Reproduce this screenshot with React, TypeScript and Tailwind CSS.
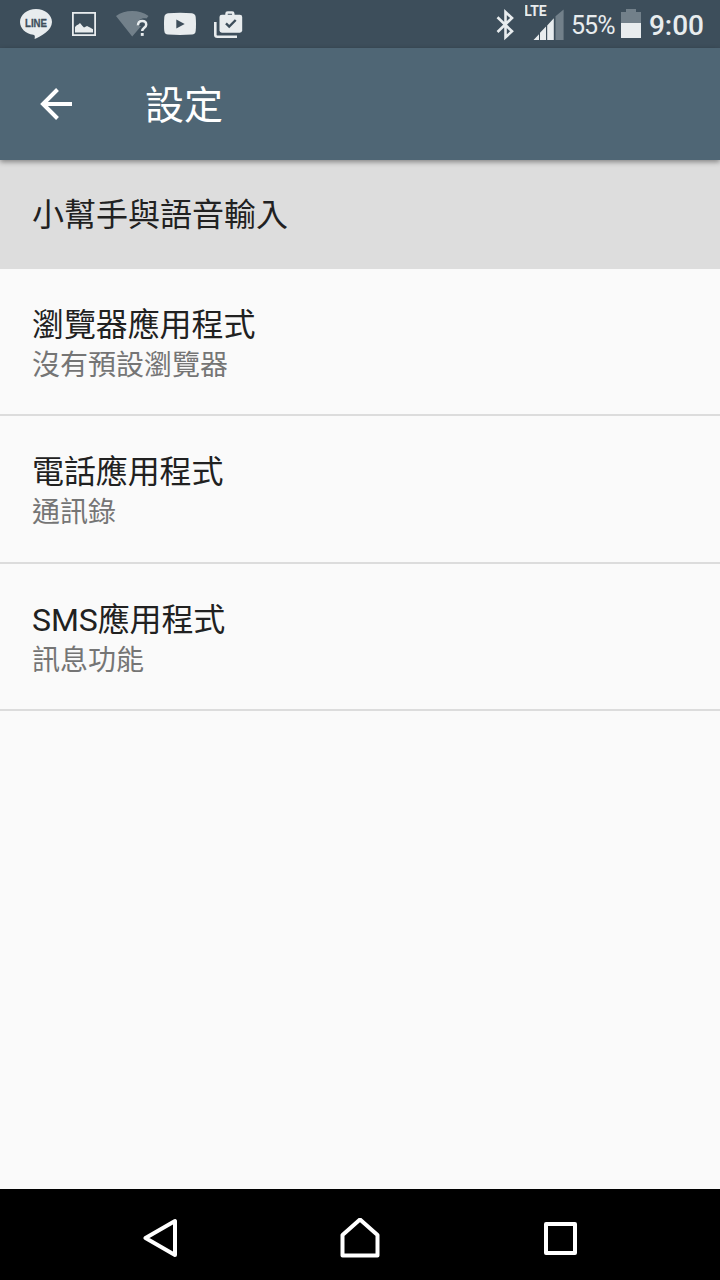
import React from "react";

interface SettingItem {
  title: string;
  summary?: string;
  selected?: boolean;
}

const items: SettingItem[] = [
  { title: "小幫手與語音輸入", selected: true },
  { title: "瀏覽器應用程式", summary: "沒有預設瀏覽器" },
  { title: "電話應用程式", summary: "通訊錄" },
  { title: "SMS應用程式", summary: "訊息功能" },
];

const NotificationIcons: React.FC = () => (
  <div className="flex items-center text-[#e8ecee]">
    {/* LINE */}
    <svg width="32" height="48" viewBox="0 0 32 48" fill="currentColor">
      <path d="M16 9C7.2 9 0 14.8 0 22c0 6.400 5.700 11.800 13.300 12.800 1.900.4 1.700 1.600 1.300 4.200C20.500 36.500 32 30.500 32 22 32 14.800 24.800 9 16 9z" />
      <text
        x="16"
        y="26.500"
        textAnchor="middle"
        textLength="22"
        lengthAdjust="spacingAndGlyphs"
        strokeWidth="0.3"
        className="fill-[#3d4e5b] stroke-[#3d4e5b] font-['Liberation_Sans'] text-[11px] font-bold"
      >
        LINE
      </text>
    </svg>
    {/* Screenshot */}
    <svg className="ml-5" width="24" height="48" viewBox="0 0 24 48">
      <rect x=".9" y="12.900" width="22.200" height="22.200" fill="none" stroke="currentColor" strokeWidth="1.800" />
      <path d="M3 32.500V27l2-2 1-.2L8 23l2.500 3 1.500 1.500 3-1.500 3 1.500 3 1.700v3.300z" fill="currentColor" />
    </svg>
    {/* Wi-Fi */}
    <svg className="ml-5" width="33" height="48" viewBox="0 0 33 48">
      <path
        d="M16.200 36.500 0 16C4.500 12.700 10 11 16.200 11s11.800 1.700 16.300 5l-2 2.600c-4-1.200-9.500 1-9.500 7.400h4.200z"
        fill="#72808a"
      />
      <path
        d="M22 25.500c0-3 1.500-4.400 4.200-4.400 2.500 0 4 1.300 4 3.600 0 3-4 3.100-4 6.300"
        fill="none"
        stroke="currentColor"
        strokeWidth="2.500"
      />
      <rect x="24.800" y="33" width="2.900" height="2.900" fill="currentColor" />
    </svg>
    {/* YouTube */}
    <svg className="ml-[15px]" width="32" height="48" viewBox="0 0 32 48">
      <path
        d="M4 13.300Q16 12.400 28 13.300Q31.300 13.700 31.700 17Q32.300 24 31.700 31Q31.300 34.200 28 34.600Q16 35.400 4 34.600Q.7 34.200.3 31Q-.3 24 .3 17Q.7 13.700 4 13.300z"
        fill="currentColor"
      />
      <path d="M12.300 19.500 20.700 24l-8.400 4.500z" fill="#3d4e5b" />
    </svg>
    {/* App updates */}
    <svg className="ml-[18px]" width="29" height="48" viewBox="0 0 29 48" fill="none">
      <path d="M1.300 22v13q0 1.700 2 1.700H23" stroke="currentColor" strokeWidth="2.600" />
      <path d="M12.500 15v-1.300q0-1.200 1.200-1.200h4.400q1.200 0 1.200 1.200V15" stroke="currentColor" strokeWidth="2.500" />
      <rect x="5.500" y="14.700" width="22.700" height="18" rx="2.400" fill="currentColor" />
      <path d="m12 23.300 3.200 3.200 6.500-6.500" stroke="#3d4e5b" strokeWidth="2.400" />
    </svg>
  </div>
);

const SystemIcons: React.FC = () => (
  <div className="flex items-center text-[#e8ecee]">
    {/* Bluetooth */}
    <svg width="20" height="48" viewBox="0 0 20 48" fill="none">
      <path d="m1.500 17.300 14.500 14-6.500 6V12l6.500 6L1.500 32" stroke="currentColor" strokeWidth="2.600" />
    </svg>
    {/* Mobile signal */}
    <svg className="ml-[9px]" width="40" height="48" viewBox="0 0 40 48" fill="currentColor">
      <text
        x="-.8"
        y="16"
        textLength="22.500"
        lengthAdjust="spacingAndGlyphs"
        className="font-[Roboto] text-[14px] font-bold"
      >
        LTE
      </text>
      <path d="M8.500 40 14 34.300V40zM15 32.800l6-6.400V40h-6zM22.200 25.500l6.600-7.200V40h-6.600z" />
      <path d="m30.500 16.200 8.100-6.700V40h-8.100z" fill="#72808a" />
    </svg>
    <span className="ml-[6px] w-[45px] pt-[3px] text-[25px] leading-[30px] tracking-[-0.900px] whitespace-nowrap">55%</span>
    {/* Battery */}
    <svg className="ml-[5px]" width="20" height="48" viewBox="0 0 20 48">
      <path d="M0 12h5V9h10v3h5v11H0z" fill="#72808a" />
      <path d="M0 23h20v15H0z" fill="currentColor" />
    </svg>
    <span className="ml-2 pt-[3px] text-[28px] leading-[34px] font-medium">9:00</span>
  </div>
);

const SettingRow: React.FC<{ item: SettingItem }> = ({ item }) => {
  if (item.selected) {
    return (
      <li className="flex h-[109px] items-center bg-[#dddddd] px-8 text-[32px] leading-[48px]">
        {item.title}
      </li>
    );
  }

  return (
    <li className="h-[147.300px] border-b-2 border-[#dcdcdc] px-8 pt-[32px]">
      <p className="text-[32px] leading-[48px] tracking-[-0.1px]">{item.title}</p>
      <p className="-mt-[3px] text-[28px] leading-[40px] text-[#757575]">{item.summary}</p>
    </li>
  );
};

const App: React.FC = () => {
  return (
    <div className="flex h-[1280px] w-[720px] flex-col overflow-hidden bg-[#fafafa] font-[Roboto,'Noto_Sans_CJK_TC',sans-serif] text-[#212121]">
      <div className="flex h-12 shrink-0 items-center justify-between bg-[#3d4e5b] pr-4 pl-5">
        <NotificationIcons />
        <SystemIcons />
      </div>

      <header className="z-10 flex h-28 shrink-0 items-center bg-[#4f6675] pl-10 text-white shadow-[0_2px_5px_rgba(0,0,0,0.4)]">
        <svg width="32" height="32" viewBox="0 0 32 32" fill="none" stroke="currentColor" strokeWidth="4">
          <path d="M32 16H3M17.500 1.500 3 16l14.500 14.500" />
        </svg>
        <h1 className="ml-[73px] pt-1 text-[39px] leading-[56px]">設定</h1>
      </header>

      <ul className="flex-1">
        {items.map((item) => (
          <SettingRow key={item.title} item={item} />
        ))}
      </ul>

      <nav className="flex h-[91px] shrink-0 items-center bg-black pt-[7px] pl-[143px] text-white">
        <svg width="35" height="40" viewBox="0 0 35 40" fill="none" stroke="currentColor" strokeWidth="4" strokeLinejoin="round">
          <path d="M2.500 20 32 3v34z" />
        </svg>
        <svg className="ml-[162px]" width="40" height="40" viewBox="0 0 40 40" fill="none" stroke="currentColor" strokeWidth="4" strokeLinejoin="round">
          <path d="M20 1.500 2.500 17v20.500h35V17z" />
        </svg>
        <svg className="ml-[164px]" width="33" height="33" viewBox="0 0 33 33" fill="none" stroke="currentColor" strokeWidth="4" strokeLinejoin="round">
          <path d="M2 2h29v29H2z" />
        </svg>
      </nav>
    </div>
  );
};

export default App;
